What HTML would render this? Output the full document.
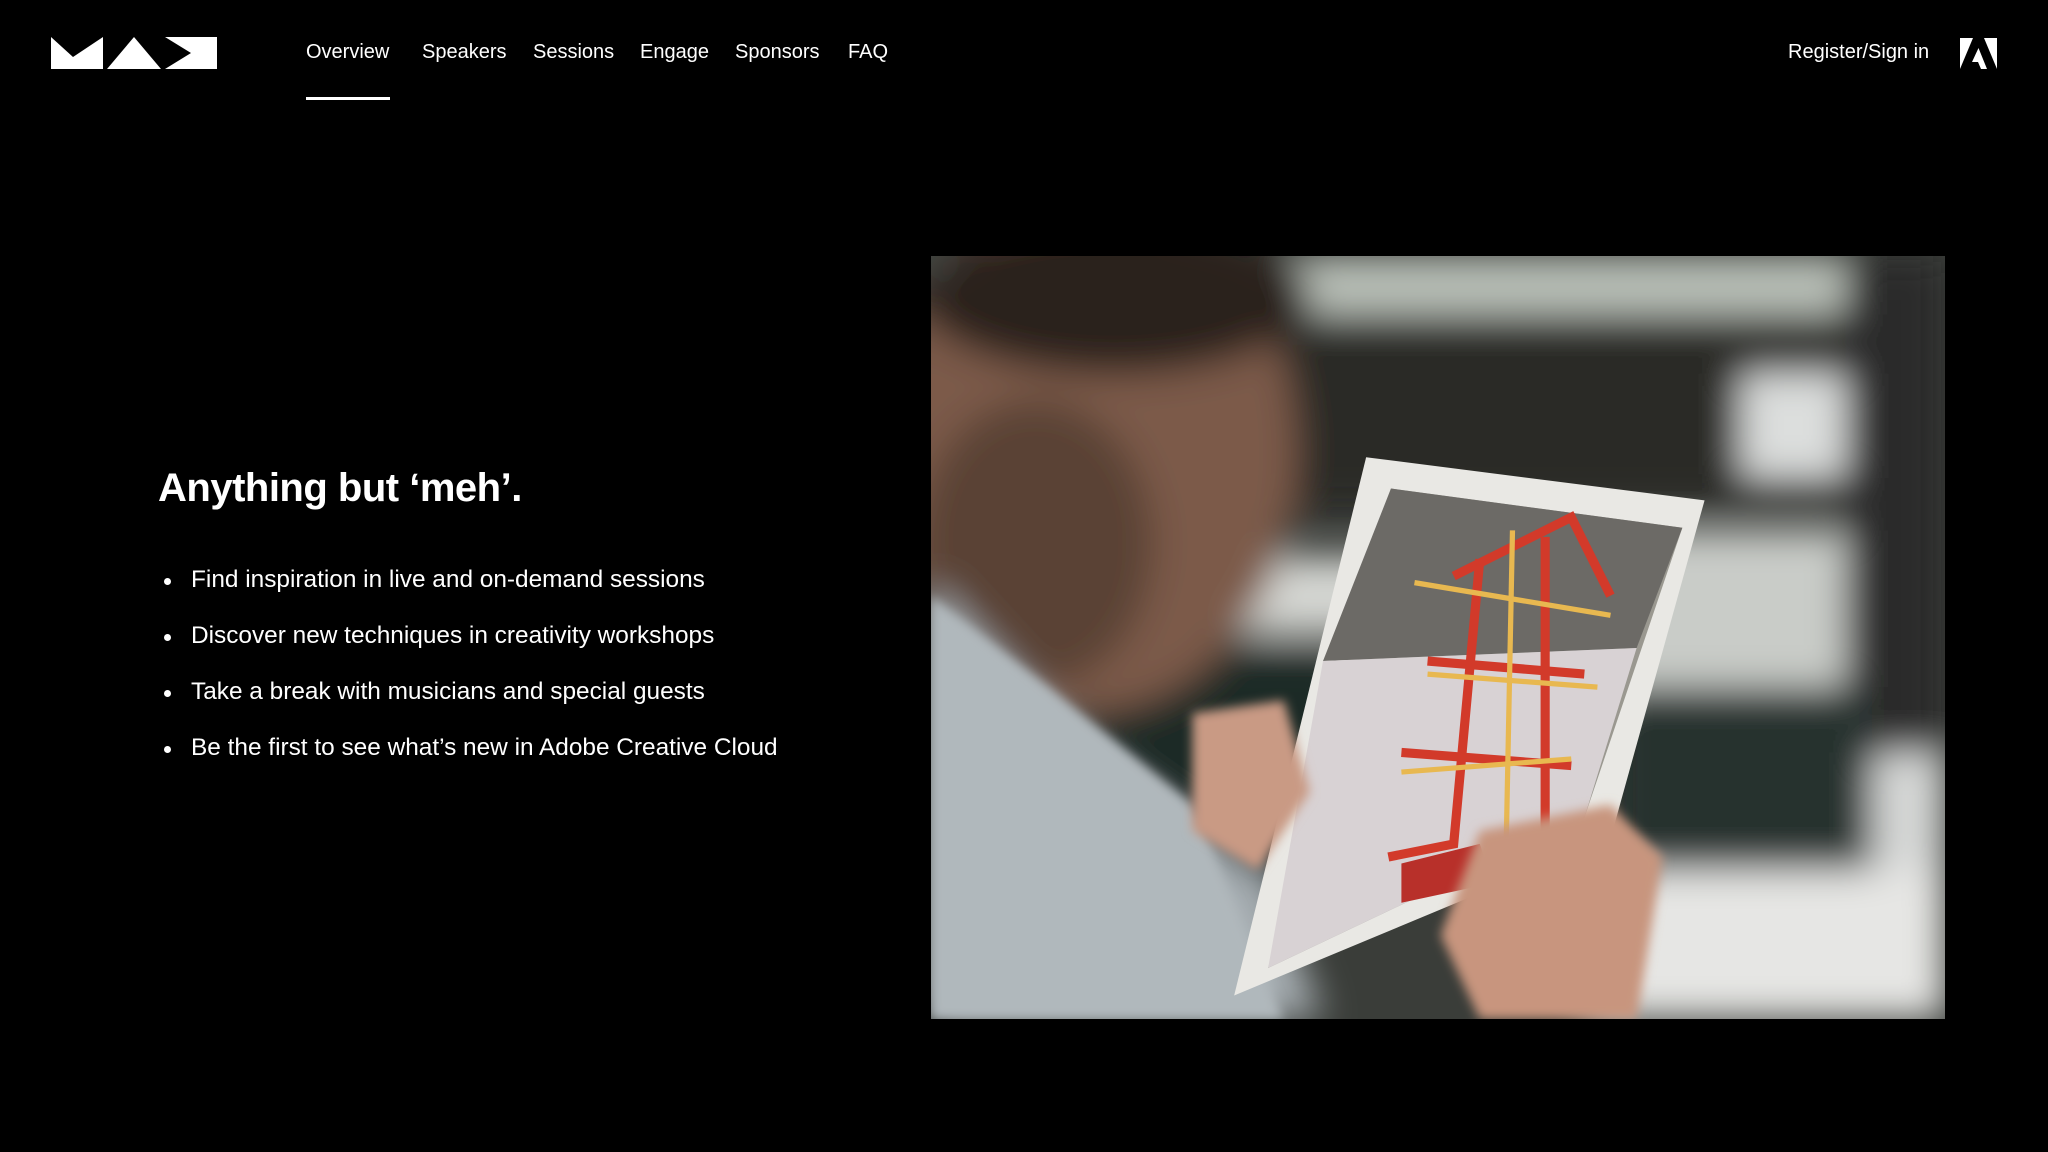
<!DOCTYPE html>
<html><head><meta charset="utf-8"><style>
html,body{margin:0;padding:0;background:#000;width:2048px;height:1152px;overflow:hidden}
body{font-family:"Liberation Sans",sans-serif;color:#fff;position:relative}
.nav{position:absolute;top:38px;font-size:20px;line-height:28px;color:#fff}
.ul{position:absolute;left:306px;top:97px;width:84px;height:3px;background:#fff}
h1{position:absolute;left:158px;top:466px;margin:0;font-size:40px;font-weight:bold;letter-spacing:-0.5px}
.li{position:absolute;left:191px;font-size:24.4px;line-height:30px}
.li:before{content:"";position:absolute;left:-27px;top:13px;width:7px;height:7px;border-radius:50%;background:#fff}
.photo{position:absolute;left:931px;top:256px;width:1014px;height:763px;overflow:hidden}
</style></head><body>
<svg style="position:absolute;left:51px;top:37px" width="166" height="32" viewBox="0 0 166 32">
<polygon points="0,0 0,32 52,32 52,0 22,20" fill="#fff"/>
<polygon points="56,32 83,0 110,32" fill="#fff"/>
<polygon points="114,0 166,0 166,32 114,32 140,16" fill="#fff"/>
</svg>
<div class="nav" style="left:306px">Overview</div>
<div class="nav" style="left:422px">Speakers</div>
<div class="nav" style="left:533px">Sessions</div>
<div class="nav" style="left:640px">Engage</div>
<div class="nav" style="left:735px">Sponsors</div>
<div class="nav" style="left:848px">FAQ</div>
<div class="ul"></div>
<div class="nav" style="left:1788px">Register/Sign in</div>
<svg style="position:absolute;left:1960px;top:38px" width="37" height="31" viewBox="0 0 37 31">
<polygon points="0,0 13,0 0,31" fill="#fff"/><polygon points="24,0 37,0 37,31" fill="#fff"/>
<polygon points="18.5,10 27,31 21,31 18,24 12,24" fill="#fff"/>
</svg>
<h1>Anything but ‘meh’.</h1>
<div class="li" style="top:565px">Find inspiration in live and on-demand sessions</div>
<div class="li" style="top:621px">Discover new techniques in creativity workshops</div>
<div class="li" style="top:677px">Take a break with musicians and special guests</div>
<div class="li" style="top:733px">Be the first to see what’s new in Adobe Creative Cloud</div>
<div class="photo">
<svg width="1014" height="763" viewBox="0 0 776 584" preserveAspectRatio="none">
<defs><filter id="b"><feGaussianBlur stdDeviation="14"/></filter><filter id="s"><feGaussianBlur stdDeviation="4"/></filter></defs>
<rect width="776" height="584" fill="#3a3d39"/>
<g filter="url(#b)">
<rect x="0" y="0" width="776" height="45" fill="#b9c0b8"/>
<rect x="200" y="45" width="576" height="150" fill="#2b2a27"/>
<rect x="160" y="230" width="200" height="60" fill="#d4d6d2"/>
<rect x="420" y="210" width="356" height="140" fill="#c9ccc8"/>
<rect x="620" y="90" width="120" height="80" fill="#dcdedd"/>
<rect x="700" y="0" width="76" height="584" fill="#2a2c2c"/>
<rect x="690" y="380" width="86" height="90" fill="#d5d7d6"/>
<rect x="520" y="330" width="200" height="250" fill="#27312d"/>
<rect x="500" y="470" width="276" height="114" fill="#e6e6e4"/>
<rect x="120" y="300" width="200" height="200" fill="#1e2a26"/>
<ellipse cx="120" cy="150" rx="160" ry="200" fill="#7c5a48"/>
<ellipse cx="140" cy="30" rx="150" ry="60" fill="#2a201b"/>
<ellipse cx="80" cy="220" rx="90" ry="110" fill="#5a4236"/>
<polygon points="0,250 120,380 260,480 300,584 0,584" fill="#a7afb3"/>
</g>
<g filter="url(#s)">
<polygon points="0,260 90,330 200,420 270,584 0,584" fill="#b0b8bc"/>
</g>
<polygon points="333,154 592,187 520,446 232,566" fill="#e9e8e4"/>
<polygon points="352,178 575,208 500,430 258,545" fill="#9a9890"/>
<polygon points="352,178 575,208 540,300 300,310" fill="#6c6a66"/>
<polygon points="300,310 540,300 500,430 258,545" fill="#d8d2d4"/>
<g fill="none" stroke="#d23a2a" stroke-width="7">
<path d="M420 232 L400 450 L350 460"/><path d="M470 215 L470 440"/>
<path d="M400 245 L490 200 L520 260"/><path d="M380 310 L500 320"/><path d="M360 380 L490 390"/>
</g>
<g fill="none" stroke="#e8b850" stroke-width="4">
<path d="M370 250 L520 275"/><path d="M380 320 L510 330"/><path d="M360 395 L490 385"/><path d="M445 210 L440 460"/>
</g>
<polygon points="360,465 420,450 430,480 360,495" fill="#b8302a"/>
<g filter="url(#s)">
<polygon points="200,350 270,340 290,410 250,470 200,440" fill="#c99a84"/>
<polygon points="420,440 520,420 560,460 540,584 420,584 390,520" fill="#c8957e"/>
</g>
</svg>
</div>
</body></html>
